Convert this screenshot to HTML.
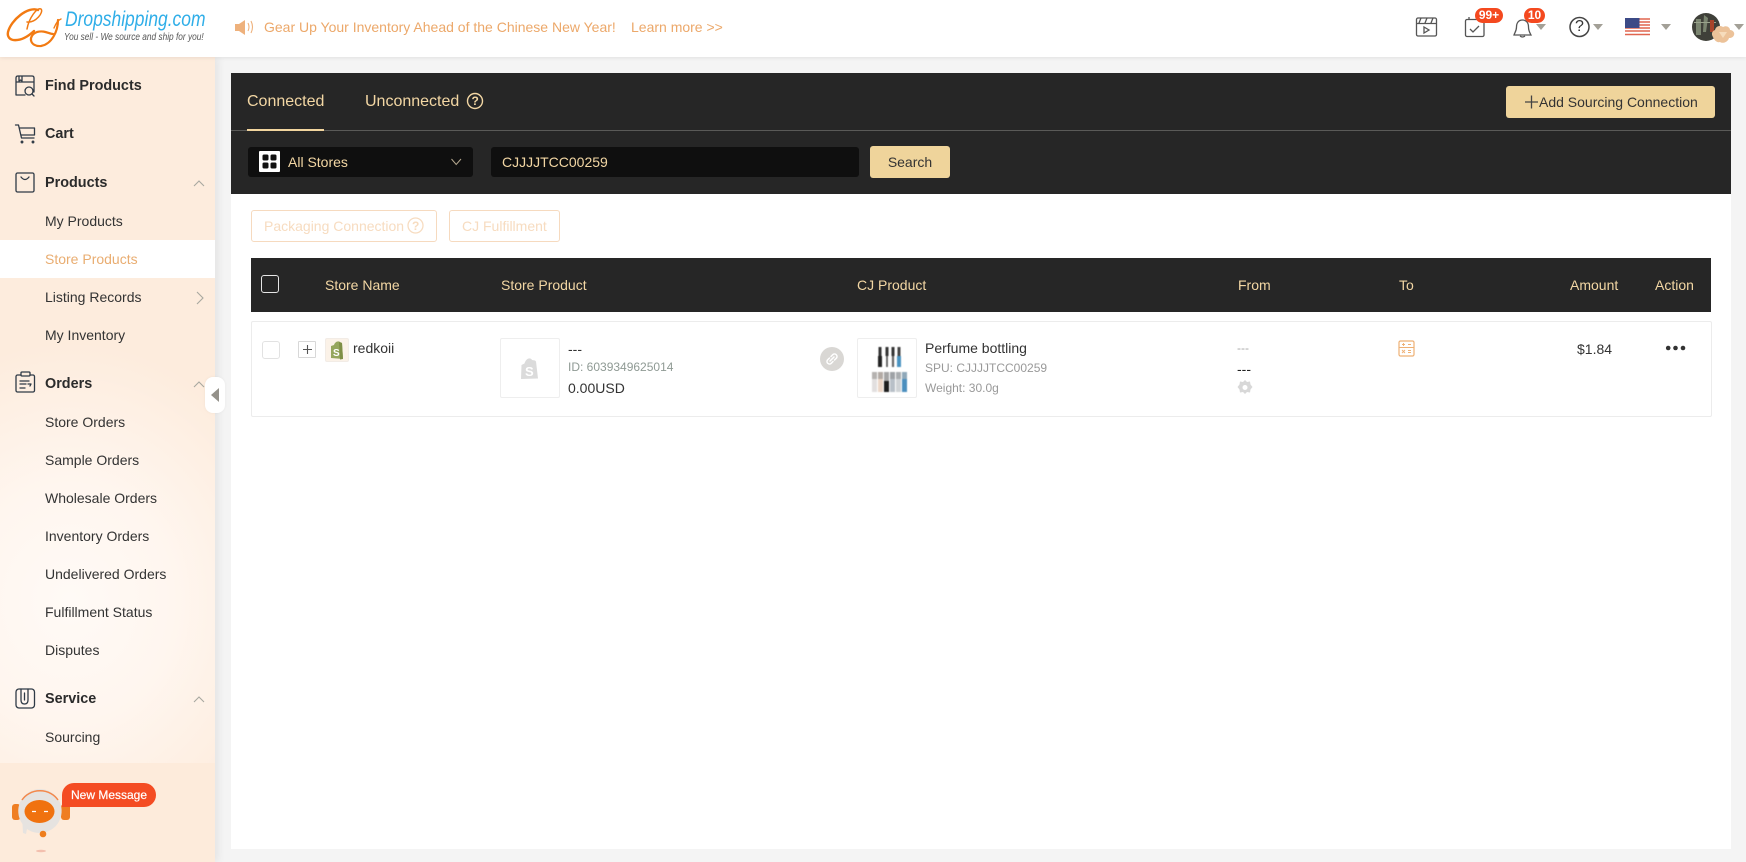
<!DOCTYPE html>
<html lang="en"><head><meta charset="utf-8"><title>Store Products</title>
<style>
*{box-sizing:border-box}
html,body{margin:0;padding:0;width:1746px;height:862px;overflow:hidden;background:#f4f4f4;font-family:"Liberation Sans",Arial,sans-serif;font-size:14px;color:#333}
.t{position:absolute;line-height:20px;height:20px;white-space:nowrap}
.b{font-weight:700;color:#2b2b2b;font-size:14.4px}
.box{position:absolute}
.g{color:#f3d7a4}
svg{position:absolute;overflow:visible}
</style></head><body>

<div class="box" style="left:0;top:57px;width:215px;height:805px;background:radial-gradient(ellipse 230px 260px at 70px 545px,#fffaf6 0%,#fff6ef 45%,rgba(253,236,221,0) 100%),#fdecdd;box-shadow:3px 0 8px rgba(0,0,0,.07)"></div>
<div class="box" style="left:0;top:763px;width:215px;height:99px;background:#fdebdb"></div>
<div class="box" style="left:0;top:0;width:1746px;height:57px;background:#fff;box-shadow:0 1px 4px rgba(0,0,0,.08)"></div>

<!-- logo -->
<svg style="left:0;top:0" width="70" height="50" fill="none" stroke="#f27a12" stroke-linecap="round">
<path d="M38 10C28 6 11 20 8 32C6 42 20 44 34 31" stroke-width="2.400"/>
<path d="M27 29C29 18 37 7 41 9C44 12 36 23 27 22" stroke-width="1.500"/>
<path d="M58 20C58 31 52 44 41 46C30 47 27 36 37 32C45 30 49 34 53 34" stroke-width="2.200"/>
<path d="M54 28C56 23 58 20 61 19" stroke-width="1.400"/>
</svg>
<div class="t" style="left:65px;top:9px;font-size:21px;font-style:italic;color:#2faee8;line-height:22px;height:22px;transform:scaleX(.83);transform-origin:0 0">Dropshipping.com</div>
<div class="t" style="left:64px;top:28px;font-size:10px;font-style:italic;color:#555;transform:scaleX(.83);transform-origin:0 0">You sell - We source and ship for you!</div>

<!-- notice -->
<svg style="left:234px;top:17px" width="22" height="20"><path d="M1 7h4l6-4v15l-6-4H1z" fill="#eeb17c"/><path d="M14 6q2 4 0 8M17 4q3 6 0 12" fill="none" stroke="#eeb17c" stroke-width="1.100"/></svg>
<div class="t" style="left:264px;top:17px;color:#eca86a">Gear Up Your Inventory Ahead of the Chinese New Year!</div>
<div class="t" style="left:631px;top:17px;color:#eca86a">Learn more &gt;&gt;</div>

<!-- top icons -->
<svg style="left:0;top:0" width="1746" height="57" fill="none">
<g stroke="#555" stroke-width="1.300">
<rect x="1416.500" y="18" width="20" height="18" rx="1.500"/><path d="M1416.500 23.500h20M1421 18l-2 5M1427 18l-2 5M1433 18l-2 5"/><path d="M1424 27l5 3-5 3z"/>
<rect x="1465.500" y="19.500" width="18.500" height="17" rx="1.500"/><path d="M1469 20v-3"/><path d="M1470 29l3 3 6-6"/>
<path d="M1522.500 20c-4 0-6 3-6 7 0 4-2 6-2.500 8h17c-1-2-2.500-4-2.500-8 0-4-2-7-6-7z"/><path d="M1520 36q2.500 2 5 0"/>
<circle cx="1579.500" cy="27" r="9.500" stroke-width="1.500" stroke="#444"/>
</g>
<path d="M1536 24h10l-5 6zM1593 24h10l-5 6zM1661 24h10l-5 6zM1734 24h10l-5 6z" fill="#a3a097"/>
<rect x="1625" y="18" width="25" height="18" fill="#fff"/>
<path d="M1625 19h25M1625 22h25M1625 25h25M1625 28h25M1625 31h25M1625 34.500h25" stroke="#e0654f" stroke-width="1.500"/>
<rect x="1625" y="18" width="14.500" height="10" fill="#3c4a86"/>
<circle cx="1706" cy="27" r="14" fill="#3f4039"/>
<path d="M1696 19h5v16h-5zM1704 15l4 3-2 14h-3z" fill="#7b8570"/><path d="M1694 22h22v1h-22z" fill="#9aa38c"/><path d="M1710 20h4v12h-4z" fill="#a8442a"/>
<path d="M1713 37c-2-3-1-6 2-7 1-4 5-5 8-3 3-2 7 0 7 3 3 0 5 3 4 5-1 3-4 3-5 3-1 4-6 6-9 4-3 1-6-2-7-5z" fill="#ecc299"/>
<path d="M1719 32h8l-4 6z" fill="#f6dcbc"/>
</svg>
<div class="t" style="left:1579.500px;top:17px;transform:translateX(-50%);font-size:16px;color:#333">?</div>
<div class="box" style="left:1475px;top:8px;width:28px;height:15px;border-radius:8px;background:#f4491f;color:#fff;font-size:12px;font-weight:700;text-align:center;line-height:15px">99+</div>
<div class="box" style="left:1524px;top:8px;width:21px;height:15px;border-radius:8px;background:#f4491f;color:#fff;font-size:12px;font-weight:700;text-align:center;line-height:15px">10</div>

<!-- sidebar icons -->
<svg style="left:0;top:57px" width="215" height="700" fill="none" stroke="#2f3a46" stroke-width="1.300" stroke-linecap="round" stroke-linejoin="round">
<path d="M16 38V21q0-2 2-2h14q2 0 2 2v14M16 25h18M19 19v5l1.500-1 1.500 1v-5M16 38h9"/><circle cx="29" cy="34" r="4"/><path d="M32 37l2 2"/>
<path d="M15.500 68h3l3 13h12.500M20 71h14.500v7h-13"/><circle cx="22" cy="85" r=".8"/><circle cx="33" cy="85" r=".8"/>
<rect x="16" y="116" width="18" height="19" rx="1.500"/><path d="M21 120q4 5 8 0"/>
<rect x="16" y="318" width="18.500" height="17" rx="1.500"/><rect x="21" y="315" width="9" height="4" rx="1" fill="#fdecdd"/><path d="M20 324h9M20 327h6M20 331h5M28 327h3l-1 2"/>
<rect x="16" y="632" width="18.500" height="19" rx="3"/><path d="M21 632v11q0 4 3.500 4t3.500-4v-11M24.500 636v7M28 632h0"/>
</svg>
<div class="t b" style="left:45px;top:76px">Find Products</div>
<div class="t b" style="left:45px;top:124px">Cart</div>
<div class="t b" style="left:45px;top:173px">Products</div>
<div class="box" style="left:0;top:240px;width:215px;height:38px;background:#fff"></div>
<div class="t" style="left:45px;top:211px">My Products</div>
<div class="t" style="left:45px;top:249px;color:#e9ad71">Store Products</div>
<div class="t" style="left:45px;top:287px">Listing Records</div>
<div class="t" style="left:45px;top:325px">My Inventory</div>
<div class="t b" style="left:45px;top:374px">Orders</div>
<div class="t" style="left:45px;top:412px">Store Orders</div>
<div class="t" style="left:45px;top:450px">Sample Orders</div>
<div class="t" style="left:45px;top:488px">Wholesale Orders</div>
<div class="t" style="left:45px;top:526px">Inventory Orders</div>
<div class="t" style="left:45px;top:564px">Undelivered Orders</div>
<div class="t" style="left:45px;top:602px">Fulfillment Status</div>
<div class="t" style="left:45px;top:640px">Disputes</div>
<div class="t b" style="left:45px;top:689px">Service</div>
<div class="t" style="left:45px;top:727px">Sourcing</div>
<svg style="left:0;top:0" width="215" height="760" fill="none" stroke="#a8a8a0" stroke-width="1.100">
<path d="M194 186l5-5 5 5M194 387l5-5 5 5M194 702l5-5 5 5M197 292l6 6-6 6"/>
</svg>
<div class="box" style="left:205px;top:377px;width:20px;height:36px;background:#fff;border-radius:8px;box-shadow:0 0 3px rgba(0,0,0,.05)"></div>
<svg style="left:211px;top:388px" width="10" height="14"><path d="M8 0v14L0 7z" fill="#94918a"/></svg>

<!-- robot -->
<svg style="left:0;top:770px" width="80" height="90">
<rect x="12" y="34" width="8.500" height="16" rx="3" fill="#ef7e22"/><rect x="61" y="34" width="9" height="16" rx="3" fill="#ef7e22"/>
<path d="M40 19a22 22 0 1 1-13 40l-1 5-3-1 -.500-9a22 22 0 0 1 17.500-35z" fill="#e6e3e0"/>
<path d="M22 30a21 19 0 0 1 36 0" fill="none" stroke="#f4884a" stroke-width="1.500"/>
<ellipse cx="39.500" cy="41.500" rx="15" ry="11.500" fill="#f0720f"/>
<path d="M32 41.500h4M44 41.500h4" stroke="#fff" stroke-width="1.200"/>
<circle cx="43" cy="64" r="3.300" fill="#ee7d1c"/>
<ellipse cx="41" cy="81" rx="5" ry="1.200" fill="#f3bfae"/>
</svg>
<div class="box" style="left:62px;top:783px;width:94px;height:24px;background:#f44c23;border-radius:12px 12px 12px 0;color:#fff;font-size:12px;font-weight:400;text-align:center;line-height:24px;-webkit-text-stroke:.2px #fff">New Message</div>

<!-- dark panel -->
<div class="box" style="left:231px;top:73px;width:1500px;height:121px;background:#262626"></div>
<div class="box" style="left:231px;top:130px;width:1500px;height:1px;background:#5a5a58"></div>
<div class="box" style="left:247px;top:129px;width:77px;height:2px;background:#f2d59e"></div>
<div class="t g" style="left:247px;top:92px;font-size:16px">Connected</div>
<div class="t g" style="left:365px;top:92px;font-size:16px">Unconnected</div>
<svg style="left:466px;top:92px" width="18" height="18" fill="none"><circle cx="9" cy="9" r="7.500" stroke="#f3d7a4" stroke-width="1.400"/></svg>
<div class="t g" style="left:471.500px;top:91px;font-size:12px;font-weight:700">?</div>
<div class="box" style="left:1506px;top:86px;width:209px;height:32px;background:#efd49b;border-radius:3px"></div>
<svg style="left:1525px;top:95px" width="14" height="14"><path d="M0 7h13M6.500 .5v13" stroke="#444" stroke-width="1.300"/></svg>
<div class="t" style="left:1539px;top:92px;color:#333">Add Sourcing Connection</div>
<div class="box" style="left:248px;top:147px;width:225px;height:30px;background:#0f0f0f;border-radius:3px"></div>
<svg style="left:259px;top:151px" width="21" height="21"><rect width="21" height="21" rx="1" fill="#fff"/><rect x="3.500" y="3.500" width="6" height="6" rx="1.500" fill="#111"/><rect x="11.500" y="3.500" width="6" height="6" rx="1.500" fill="#111"/><rect x="3.500" y="11.500" width="6" height="6" rx="1.500" fill="#111"/><rect x="11.500" y="11.500" width="6" height="6" rx="1.500" fill="#111"/></svg>
<div class="t g" style="left:288px;top:152px">All Stores</div>
<svg style="left:451px;top:158px" fill="none" width="11" height="8"><path d="M.5 1l4.700 5.500L10 1" stroke="#b5a88f" stroke-width="1"/></svg>
<div class="box" style="left:491px;top:147px;width:368px;height:30px;background:#0f0f0f;border-radius:3px"></div>
<div class="t g" style="left:502px;top:152px">CJJJJTCC00259</div>
<div class="box" style="left:870px;top:146px;width:80px;height:32px;background:#efd49b;border-radius:3px;text-align:center;line-height:32px;color:#333">Search</div>

<!-- content -->
<div class="box" style="left:231px;top:194px;width:1500px;height:655px;background:#fff"></div>
<div class="box" style="left:251px;top:210px;width:186px;height:32px;border:1px solid #f6dabf;border-radius:3px"></div>
<div class="t" style="left:264px;top:216px;color:#f7dcc0">Packaging Connection</div>
<svg style="left:407px;top:217px" width="18" height="18" fill="none"><circle cx="8.500" cy="8.500" r="7.500" stroke="#f7dcc0" stroke-width="1.300"/></svg>
<div class="t" style="left:412px;top:216px;color:#f7dcc0;font-size:12px;font-weight:700">?</div>
<div class="box" style="left:449px;top:210px;width:111px;height:32px;border:1px solid #f6dabf;border-radius:3px"></div>
<div class="t" style="left:462px;top:216px;color:#f7dcc0">CJ Fulfillment</div>

<div class="box" style="left:251px;top:258px;width:1460px;height:54px;background:#262626"></div>
<div class="box" style="left:261px;top:275px;width:18px;height:18px;border:1.500px solid #e6e6e6;border-radius:3px"></div>
<div class="t g" style="left:325px;top:275px">Store Name</div>
<div class="t g" style="left:501px;top:275px">Store Product</div>
<div class="t g" style="left:857px;top:275px">CJ Product</div>
<div class="t g" style="left:1238px;top:275px">From</div>
<div class="t g" style="left:1399px;top:275px">To</div>
<div class="t g" style="left:1570px;top:275px">Amount</div>
<div class="t g" style="left:1655px;top:275px">Action</div>

<div class="box" style="left:251px;top:321px;width:1461px;height:96px;border:1px solid #ececec;border-radius:2px"></div>
<div class="box" style="left:262px;top:341px;width:18px;height:18px;border:1.500px solid #e2e2e2;border-radius:3px"></div>
<div class="box" style="left:298px;top:341px;width:18px;height:17px;border:1px solid #d8d8d8;border-radius:1px"></div>
<svg style="left:303px;top:345px" width="9" height="9"><path d="M0 4.500h9M4.500 0v9" stroke="#555" stroke-width="1.100"/></svg>
<div class="box" style="left:325px;top:338px;width:24px;height:24px;background:#fbf2e8;border:1px solid #f2ece6;border-radius:2px"></div>
<svg style="left:329px;top:341px" width="17" height="19"><path d="M2 5l3-1c1-3 4-4.500 6-3l2 1 1 16-12-1z" fill="#96a75e"/><path d="M10 1l3 1 1 16-3 .5z" fill="#7f8f46"/><text x="4" y="15" font-family="Liberation Sans" font-size="10" font-weight="700" fill="#fff">S</text></svg>
<div class="t" style="left:353px;top:338px;color:#333">redkoii</div>

<div class="box" style="left:500px;top:338px;width:60px;height:60px;border:1px solid #eeeeee;border-radius:2px"></div>
<svg style="left:520px;top:358px" width="20" height="23"><path d="M1.500 7l3-1.500C5.500 2 8 0 10 0.500c1 0 1.500.7 2 1.500l3 .5 1 1 2 17L1 21z" fill="#dbdbdb"/><text x="5" y="18" font-family="Liberation Sans" font-size="13" font-weight="700" fill="#fff">S</text></svg>
<div class="t" style="left:568px;top:339px;color:#333">---</div>
<div class="t" style="left:568px;top:357px;font-size:12px;color:#8f9a94">ID: 6039349625014</div>
<div class="t" style="left:568px;top:378px;color:#333">0.00USD</div>
<svg style="left:820px;top:347px" width="24" height="24" fill="none"><circle cx="12" cy="12" r="12" fill="#d9d7d4"/><path d="M10 14l4-4M9.500 11l-2 2a2.500 2.500 0 0 0 3.500 3.500l2-2M14.500 13l2-2a2.500 2.500 0 0 0-3.500-3.500l-2 2" stroke="#fff" stroke-width="1.500" stroke-linecap="round"/></svg>

<div class="box" style="left:857px;top:338px;width:60px;height:60px;border:1px solid #eeeeee;border-radius:2px"></div>
<svg style="left:857px;top:338px;filter:blur(.4px)" width="60" height="60">
<g><rect x="21.500" y="9" width="3" height="9" fill="#333"/><rect x="21" y="18" width="4" height="11" fill="#222"/>
<rect x="28.500" y="9" width="3" height="9" fill="#333"/><rect x="28.500" y="18" width="3" height="11" fill="#ddd"/><rect x="29.500" y="18" width="1" height="11" fill="#222"/>
<rect x="34.500" y="9" width="3" height="9" fill="#333"/><rect x="34.500" y="18" width="3" height="11" fill="#bbb"/><rect x="35.500" y="18" width="1" height="11" fill="#333"/>
<rect x="40.500" y="9" width="3" height="9" fill="#444"/><rect x="40" y="18" width="4" height="11" fill="#4a94c2"/></g>
<g><rect x="15" y="34" width="5" height="7" fill="#b5b2b0"/><rect x="15" y="41" width="5" height="13" fill="#e2dfdf"/><rect x="21" y="34" width="5" height="7" fill="#b3aba5"/><rect x="21" y="41" width="5" height="13" fill="#ecd7c8"/><rect x="27" y="34" width="5" height="9" fill="#a5a5a5"/><rect x="27" y="43" width="5" height="11" fill="#1e1e1e"/><rect x="33" y="34" width="5" height="7" fill="#9ea2a6"/><rect x="33" y="41" width="5" height="13" fill="#b8c0c8"/><rect x="39" y="34" width="5" height="7" fill="#a9adb0"/><rect x="39" y="41" width="5" height="13" fill="#cfd3d6"/><rect x="45" y="34" width="5" height="7" fill="#8fa8b9"/><rect x="45" y="41" width="5" height="13" fill="#4b8fbe"/></g>
</svg>
<div class="t" style="left:925px;top:338px;color:#333">Perfume bottling</div>
<div class="t" style="left:925px;top:358px;font-size:12px;color:#999">SPU: CJJJJTCC00259</div>
<div class="t" style="left:925px;top:378px;font-size:12px;color:#999">Weight: 30.0g</div>

<div class="t" style="left:1237px;top:338px;color:#aaa;font-size:12px">---</div>
<div class="t" style="left:1237px;top:359px;color:#222;font-size:14px">---</div>
<svg style="left:1237px;top:380px" width="16" height="16"><path d="M8 0l2 2 3-.5 .5 3 2 2.500-2 2.500-.5 3-3-.5-2 2-2-2-3 .5-.5-3-2-2.500 2-2.500 .5-3 3 .5z" fill="#d8d8d8"/><circle cx="8" cy="7.500" r="2.500" fill="#fff"/></svg>

<svg style="left:1398px;top:340px" width="17" height="17" fill="none"><rect x="1" y="1" width="15" height="15" rx="1.500" stroke="#eeb074" stroke-width="1.200"/><path d="M1 7.500h15M4 4.500h3M5.500 3v3M10 4.500h3M4 10l3 3M7 10l-3 3M10 10.500h3M10 12.500h3" stroke="#eeb074" stroke-width=".9"/></svg>
<div class="t" style="left:1577px;top:339px;color:#333">$1.84</div>
<svg style="left:1665px;top:344px" width="22" height="8"><circle cx="3.200" cy="4" r="2.300" fill="#333"/><circle cx="10.500" cy="4" r="2.300" fill="#333"/><circle cx="18" cy="4" r="2.300" fill="#333"/></svg>
</body></html>
